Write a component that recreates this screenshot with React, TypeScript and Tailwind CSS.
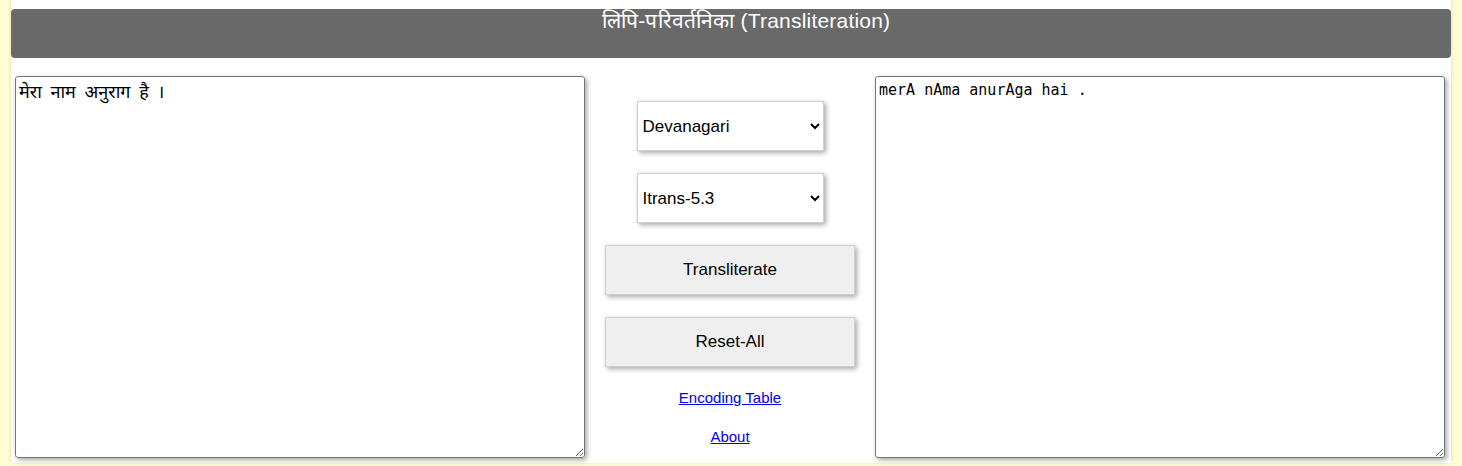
import { useState } from 'react';

export default function App() {
    const [source, setSource] = useState('मेरा नाम अनुराग है ।');
    const [output, setOutput] = useState('merA nAma anurAga hai .');

    return (
        <div className="min-h-screen bg-[#fffdd4] px-[11px] font-['Liberation_Sans',Arial,sans-serif]">
            <div className="bg-white h-[463px] pt-[9px] shadow-[0_-1px_4px_rgba(0,0,0,0.15)]">
                {/* Header */}
                <div className="h-[49px] bg-[#696969] rounded-[4px] text-white text-[21px] leading-[24px] text-center pl-[30px] tracking-[0.2px]">
                    लिपि-परिवर्तनिका (Transliteration)
                </div>

                {/* Main */}
                <div className="flex px-[4px] mt-[18px]">
                    <textarea
                        value={source}
                        onChange={(e) => setSource(e.target.value)}
                        className="w-[570px] h-[382px] border border-[#767676] rounded-[3px] px-[3px] py-[2px] text-[18px] leading-[24px] [word-spacing:4px] text-black shadow-[2px_2px_5px_rgba(0,0,0,0.35)] outline-none font-['Noto_Sans','Lohit_Devanagari',sans-serif]"
                    />

                    <div className="w-[290px] flex flex-col items-center pt-[25px]">
                        <select className="w-[187px] h-[50px] bg-white border border-[#cfcfcf] pl-[1px] pr-[6px] text-[17px] text-black shadow-[2px_2px_5px_rgba(0,0,0,0.35)] outline-none">
                            <option>Devanagari</option>
                        </select>
                        <select className="w-[187px] h-[50px] mt-[22px] bg-white border border-[#cfcfcf] pl-[1px] pr-[6px] text-[17px] text-black shadow-[2px_2px_5px_rgba(0,0,0,0.35)] outline-none">
                            <option>Itrans-5.3</option>
                        </select>
                        <button className="w-[250px] h-[50px] mt-[22px] bg-[#efefef] border border-[#cfcfcf] text-[17px] text-black shadow-[2px_2px_5px_rgba(0,0,0,0.35)]">
                            Transliterate
                        </button>
                        <button className="w-[250px] h-[50px] mt-[22px] bg-[#efefef] border border-[#cfcfcf] text-[17px] text-black shadow-[2px_2px_5px_rgba(0,0,0,0.35)]">
                            Reset-All
                        </button>
                        <a href="#" className="mt-[22px] text-[15px] leading-[18px] text-[#0000ee] underline">Encoding Table</a>
                        <a href="#" className="mt-[21px] text-[15px] leading-[18px] text-[#0000ee] underline">About</a>
                    </div>

                    <textarea
                        value={output}
                        onChange={(e) => setOutput(e.target.value)}
                        className="w-[570px] h-[382px] border border-[#767676] rounded-[3px] px-[3px] py-[3px] text-[15px] leading-[20px] text-black shadow-[2px_2px_5px_rgba(0,0,0,0.35)] outline-none font-['DejaVu_Sans_Mono',monospace]"
                    />
                </div>
            </div>
        </div>
    );
}
